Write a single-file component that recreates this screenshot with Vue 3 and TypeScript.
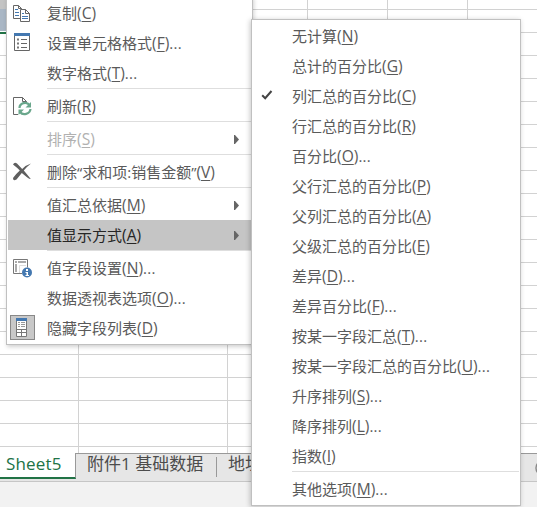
<script setup lang="ts">
interface Entry {
  label?: string
  hotkey?: string
  more?: boolean
  icon?: string
  arrow?: boolean
  disabled?: boolean
  active?: boolean
  checked?: boolean
  separator?: boolean
}

const contextMenu: Entry[] = [
  { label: '复制', hotkey: 'C', icon: 'copy' },
  { label: '设置单元格格式', hotkey: 'F', more: true, icon: 'format' },
  { label: '数字格式', hotkey: 'T', more: true },
  { separator: true },
  { label: '刷新', hotkey: 'R', icon: 'refresh' },
  { separator: true },
  { label: '排序', hotkey: 'S', arrow: true, disabled: true },
  { separator: true },
  { label: '删除“求和项:销售金额”', hotkey: 'V', icon: 'delete' },
  { separator: true },
  { label: '值汇总依据', hotkey: 'M', arrow: true },
  { label: '值显示方式', hotkey: 'A', arrow: true, active: true },
  { separator: true },
  { label: '值字段设置', hotkey: 'N', more: true, icon: 'settings' },
  { label: '数据透视表选项', hotkey: 'O', more: true },
  { label: '隐藏字段列表', hotkey: 'D', icon: 'list' },
]

const valueMenu: Entry[] = [
  { label: '无计算', hotkey: 'N' },
  { label: '总计的百分比', hotkey: 'G' },
  { label: '列汇总的百分比', hotkey: 'C', checked: true },
  { label: '行汇总的百分比', hotkey: 'R' },
  { label: '百分比', hotkey: 'O', more: true },
  { label: '父行汇总的百分比', hotkey: 'P' },
  { label: '父列汇总的百分比', hotkey: 'A' },
  { label: '父级汇总的百分比', hotkey: 'E' },
  { label: '差异', hotkey: 'D', more: true },
  { label: '差异百分比', hotkey: 'F', more: true },
  { label: '按某一字段汇总', hotkey: 'T', more: true },
  { label: '按某一字段汇总的百分比', hotkey: 'U', more: true },
  { label: '升序排列', hotkey: 'S', more: true },
  { label: '降序排列', hotkey: 'L', more: true },
  { label: '指数', hotkey: 'I' },
  { separator: true },
  { label: '其他选项', hotkey: 'M', more: true },
]
</script>

<template>
  <div class="window">
    <div class="sheet">
      <div class="columns">
        <i class="col first"></i><i class="col second"></i><i class="col third"></i><i class="col"></i><i class="col"></i>
      </div>
      <div class="header-cell"></div>
      <div class="field-cell"></div>
    </div>
    <div class="tabs">
      <div class="tab current">Sheet5</div>
      <div class="tab wide">附件1 基础数据</div>
      <div class="tab">地址</div>
      <svg class="scroll" viewBox="0 0 16 16"><circle cx="8" cy="8" r="7" /></svg>
    </div>
    <div class="status"></div>

    <div class="menu context">
      <template v-for="(item, n) in contextMenu" :key="n">
        <div v-if="item.separator" class="separator"></div>
        <div v-else class="item" :class="{ active: item.active, disabled: item.disabled }">
          <span class="gutter">
            <svg v-if="item.icon === 'copy'" class="icon copy" viewBox="0 0 20 20">
              <path d="M2.500 2.500h5l3 3v10h-8z" fill="#fff" stroke="#666" />
              <path d="M7.500 2.500v3h3" fill="none" stroke="#666" />
              <path d="M4 6.500h3M4 9.500h4M4 12.500h4" stroke="#4478b0" />
              <path d="M9.500 6.500h5l4 4v8h-9z" fill="#fff" stroke="#666" />
              <path d="M14.500 6.500v4h4" fill="none" stroke="#666" />
              <path d="M11 10.500h2M11 13.500h6M11 15.500h6" stroke="#4478b0" />
            </svg>
            <svg v-else-if="item.icon === 'format'" class="icon format" viewBox="0 0 20 20">
              <path d="M2.500 1.500h15v17h-15z" fill="#fff" stroke="#666" />
              <path d="M2 1h16v3H2z" fill="#4478b0" />
              <path d="M9 7.500h6M9 11.500h6M9 15.500h6" stroke="#666" />
              <path d="M5 6.500h2v2H5zM5 10.500h2v2H5zM5 14.500h2v2H5z" fill="#777" />
            </svg>
            <svg v-else-if="item.icon === 'refresh'" class="icon" viewBox="0 0 20 20">
              <path d="M7 18.500H2.500v-17h9l4 4v2" fill="none" stroke="#666" />
              <path d="M11.500 1.500v4h4" fill="none" stroke="#666" />
              <path d="M8.500 12c0-5 7-7 10-3M19.500 13c-.5 5-7.500 7-10.500 3" fill="none" stroke="#6aa78c" stroke-width="2.200" />
              <path d="M20 6v5.500H14.500zM7.500 19v-5.500H13z" fill="#6aa78c" />
            </svg>
            <svg v-else-if="item.icon === 'delete'" class="icon delete" viewBox="0 0 20 20">
              <path d="M2 3.500Q3.500.5 6 2.500L11.200 8Q15 4 20 2.500 15.500 6 12.800 9.500q3 3.500 7 8.500-1.500 0-3.500-1.500L10.800 12 5.500 18.500Q2 20.500 2 17 5.500 12.500 8.800 9.600 6 6.500 2 3.500z" fill="#5f5f5f" />
            </svg>
            <svg v-else-if="item.icon === 'settings'" class="icon copy" viewBox="0 0 20 20">
              <path d="M11 15.500H2.500v-14h14v8" fill="none" stroke="#777" />
              <path d="M4 3h2v2H4zM7 3h8v2H7zM4 6h2v8H4z" fill="#aaa" />
              <path d="M8.500 15V7.500H15" fill="none" stroke="#ddd" />
              <circle cx="16" cy="14.500" r="5" fill="#4478b0" />
              <path d="M15 11h2v2h-2zM14.500 14H17v3h1v1h-3.500v-1h1v-2h-1z" fill="#fff" />
            </svg>
            <span v-else-if="item.icon === 'list'" class="pressed">
              <svg viewBox="0 0 23 23">
                <path d="M5.500 2.500h10v18h-10z" fill="#fff" stroke="#777" />
                <path d="M5 2h11v3H5z" fill="#4478b0" />
                <path d="M7 6.500h2M10 6.500h4M7 8.500h2M10 8.500h4M7 10.500h2M10 10.500h4" stroke="#999" />
                <path d="M6 13.500h9M6 16.500h9M10.500 13v8" stroke="#777" />
              </svg>
            </span>
          </span>
          <span class="text">{{ item.label }}<span class="latin">(<u>{{ item.hotkey }}</u>)</span><span v-if="item.more" class="dots">...</span></span>
          <svg v-if="item.arrow" class="arrow" viewBox="0 0 5 9"><path d="M0 0h1l4 4.500-4 4.500H0z" /></svg>
        </div>
      </template>
    </div>

    <div class="menu values">
      <template v-for="(item, n) in valueMenu" :key="n">
        <div v-if="item.separator" class="separator"></div>
        <div v-else class="item">
          <span class="gutter">
            <svg v-if="item.checked" class="check" viewBox="0 0 12 10"><path d="M1.200 5.200l3 3L10.500 1" /></svg>
          </span>
          <span class="text">{{ item.label }}<span class="latin">(<u>{{ item.hotkey }}</u>)</span><span v-if="item.more" class="dots">...</span></span>
        </div>
      </template>
    </div>
  </div>
</template>

<style>
body {
  margin: 0;
  overflow: hidden;
}
</style>

<style scoped>
.window {
  position: relative;
  width: 537px;
  height: 507px;
  overflow: hidden;
  display: flex;
  flex-direction: column;
  background: #f2f2f2;
  font-family: "Open Sans", "Noto Sans CJK SC", sans-serif;
  font-size: 15px;
}
.sheet {
  position: relative;
  flex: 0 0 453px;
  background: repeating-linear-gradient(to bottom, transparent 0 9px, #d2d2d2 9px 10px, transparent 10px 23px) #fff;
}
.columns {
  display: flex;
  height: 100%;
}
.col {
  box-sizing: border-box;
  width: 80px;
  border-right: 1px solid #d2d2d2;
}
.first { width: 79px; }
.second { width: 149px; }
.header-cell {
  position: absolute;
  top: 0;
  left: 0;
  width: 10px;
  height: 9px;
  background: #c4c4c4;
}
.field-cell {
  position: absolute;
  top: 9px;
  left: 0;
  width: 10px;
  height: 22px;
  background: #aab7c5;
  border-bottom: 1px solid #fff;
  box-shadow: 0 2px #217346;
}
.tabs {
  flex: 0 0 29px;
  box-sizing: border-box;
  display: flex;
  background: #e6e6e6;
  border-top: 1px solid #999;
  border-bottom: 1px solid #c6c6c6;
  font-size: 17px;
  color: #4c4c4c;
  line-height: 20px;
}
.tab {
  position: relative;
  box-sizing: border-box;
  height: 24px;
  padding-left: 11px;
  white-space: nowrap;
}
.current {
  width: 76px;
  height: 26px;
  margin-top: -1px;
  padding: 1px 0 0 6px;
  background: #fff;
  border-right: 1px solid #999;
  border-bottom: 2px solid #217346;
  color: #217346;
  letter-spacing: 0.15px;
}
.wide {
  width: 141px;
  background: linear-gradient(#999, #999) 100% 3px / 1px 20px no-repeat;
}
.scroll {
  width: 16px;
  height: 16px;
  margin: 6px -14px 0 auto;
  fill: #f4f4f4;
  stroke: #888;
  stroke-width: 1.5;
}
.menu {
  position: absolute;
  box-sizing: border-box;
  background: #fff;
  border: 1px solid #c0c0c0;
  padding: 1px;
  color: #5a5a5a;
  box-shadow: 1px 2px 4px rgba(0, 0, 0, 0.18);
}
.context {
  left: 6px;
  top: -4px;
  width: 247px;
  height: 349px;
}
.values {
  left: 251px;
  top: 19px;
  width: 270px;
  height: 487px;
  box-shadow: -1px 1px 5px rgba(0, 0, 0, 0.22);
}
.item {
  display: flex;
  align-items: center;
  height: 30px;
}
.gutter {
  flex: 0 0 39px;
  height: 30px;
  display: flex;
  align-items: center;
}
.text {
  white-space: nowrap;
  height: 30px;
  line-height: 31px;
}
.latin {
  font-size: 15.6px;
  line-height: 1;
}
.text u {
  text-decoration: underline;
  text-decoration-thickness: 1px;
  text-underline-offset: 2px;
  text-decoration-skip-ink: none;
}
.dots {
  letter-spacing: 0.3px;
}
.icon {
  width: 20px;
  height: 20px;
  margin-left: 3px;
  overflow: visible;
}
.copy { margin-top: -1px; }
.format { margin: -2px 0 0 4px; }
.delete { margin: -2px 0 0 3px; }
.pressed {
  box-sizing: border-box;
  width: 25px;
  height: 25px;
  margin: -1px 0 0 2px;
  border: 1px solid #888;
  background: #c8c8c8;
  display: flex;
}
.active {
  background: #c5c5c5;
  color: #262626;
}
.disabled { color: #b1b1b1; }
.arrow {
  width: 5px;
  height: 9px;
  margin: 0 12px 0 auto;
  fill: #666;
}
.separator {
  height: 2px;
  margin-left: 39px;
  border-top: 1px solid #dedede;
}
.check {
  width: 12px;
  height: 10px;
  margin: -2px 0 0 8px;
  fill: none;
  stroke: #444;
  stroke-width: 2;
}
</style>
